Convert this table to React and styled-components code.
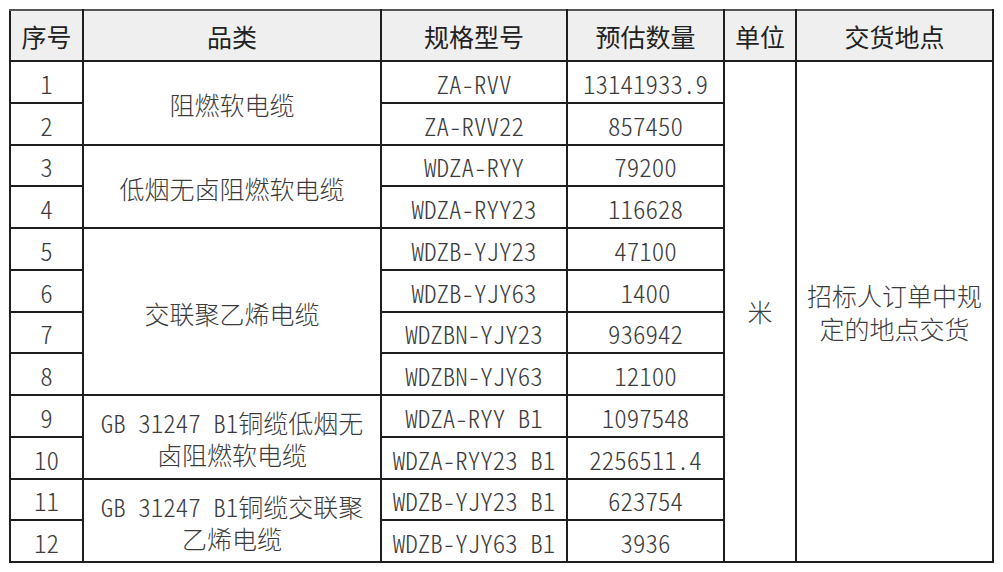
import React from "react";
import styled, { createGlobalStyle } from "styled-components";

const GlobalStyle = createGlobalStyle`
  html, body { margin: 0; padding: 0; background: #ffffff; }
`;

const Page = styled.div`
  padding: 9px 0 0 9px;
`;

const Table = styled.table`
  border-collapse: collapse;
  table-layout: fixed;
  width: 985px;
  font-family: "Noto Sans CJK SC", "Noto Sans", sans-serif;
  font-feature-settings: "hwid" 1;
  font-size: 25px;
  font-weight: 300;
  color: #3c3c3c;
`;

const Col = styled.col`
  width: ${(p) => p.$w}px;
`;

const HeadRow = styled.tr`
  height: 51px;
`;

const BodyRow = styled.tr`
  height: 41.75px;
`;

const HeadCell = styled.th`
  border: 2px solid #1e1e1e;
  border-top-color: #555555;
  background: #efefef;
  color: #222222;
  font-weight: 400;
  padding: 0;
  text-align: center;
  vertical-align: middle;
  white-space: nowrap;
  line-height: 30px;
`;

const Cell = styled.td`
  border: 2px solid #1e1e1e;
  padding: ${(p) => (p.$tall ? "0" : "3px 0 0 0")};
  text-align: center;
  vertical-align: middle;
  white-space: nowrap;
  line-height: ${(p) => p.$lh || 31}px;
`;

const columns = [
  { title: "序号", w: 73 },
  { title: "品类", w: 298 },
  { title: "规格型号", w: 186 },
  { title: "预估数量", w: 157 },
  { title: "单位", w: 72 },
  { title: "交货地点", w: 197 },
];

const groups = [
  {
    name: ["阻燃软电缆"],
    items: [
      ["ZA-RVV", "13141933.9"],
      ["ZA-RVV22", "857450"],
    ],
  },
  {
    name: ["低烟无卤阻燃软电缆"],
    items: [
      ["WDZA-RYY", "79200"],
      ["WDZA-RYY23", "116628"],
    ],
  },
  {
    name: ["交联聚乙烯电缆"],
    items: [
      ["WDZB-YJY23", "47100"],
      ["WDZB-YJY63", "1400"],
      ["WDZBN-YJY23", "936942"],
      ["WDZBN-YJY63", "12100"],
    ],
  },
  {
    name: ["GB 31247 B1铜缆低烟无", "卤阻燃软电缆"],
    items: [
      ["WDZA-RYY B1", "1097548"],
      ["WDZA-RYY23 B1", "2256511.4"],
    ],
  },
  {
    name: ["GB 31247 B1铜缆交联聚", "乙烯电缆"],
    items: [
      ["WDZB-YJY23 B1", "623754"],
      ["WDZB-YJY63 B1", "3936"],
    ],
  },
];

const totalRows = groups.reduce((n, g) => n + g.items.length, 0);

function Lines({ lines }) {
  return lines.map((l, i) => (
    <React.Fragment key={i}>
      {i > 0 && <br />}
      {l}
    </React.Fragment>
  ));
}

export default function App() {
  let index = 0;
  const rows = [];
  groups.forEach((g) => {
    g.items.forEach(([model, qty], ii) => {
      index += 1;
      const first = index === 1;
      rows.push(
        <BodyRow key={index}>
          <Cell>{index}</Cell>
          {ii === 0 && (
            <Cell rowSpan={g.items.length} $lh={32}>
              <Lines lines={g.name} />
            </Cell>
          )}
          <Cell>{model}</Cell>
          <Cell>{qty}</Cell>
          {first && (
            <Cell rowSpan={totalRows} $tall>
              米
            </Cell>
          )}
          {first && (
            <Cell rowSpan={totalRows} $tall $lh={33}>
              <Lines lines={["招标人订单中规", "定的地点交货"]} />
            </Cell>
          )}
        </BodyRow>
      );
    });
  });

  return (
    <Page>
      <GlobalStyle />
      <Table>
        <colgroup>
          {columns.map((c) => (
            <Col key={c.title} $w={c.w} />
          ))}
        </colgroup>
        <thead>
          <HeadRow>
            {columns.map((c) => (
              <HeadCell key={c.title}>{c.title}</HeadCell>
            ))}
          </HeadRow>
        </thead>
        <tbody>{rows}</tbody>
      </Table>
    </Page>
  );
}
